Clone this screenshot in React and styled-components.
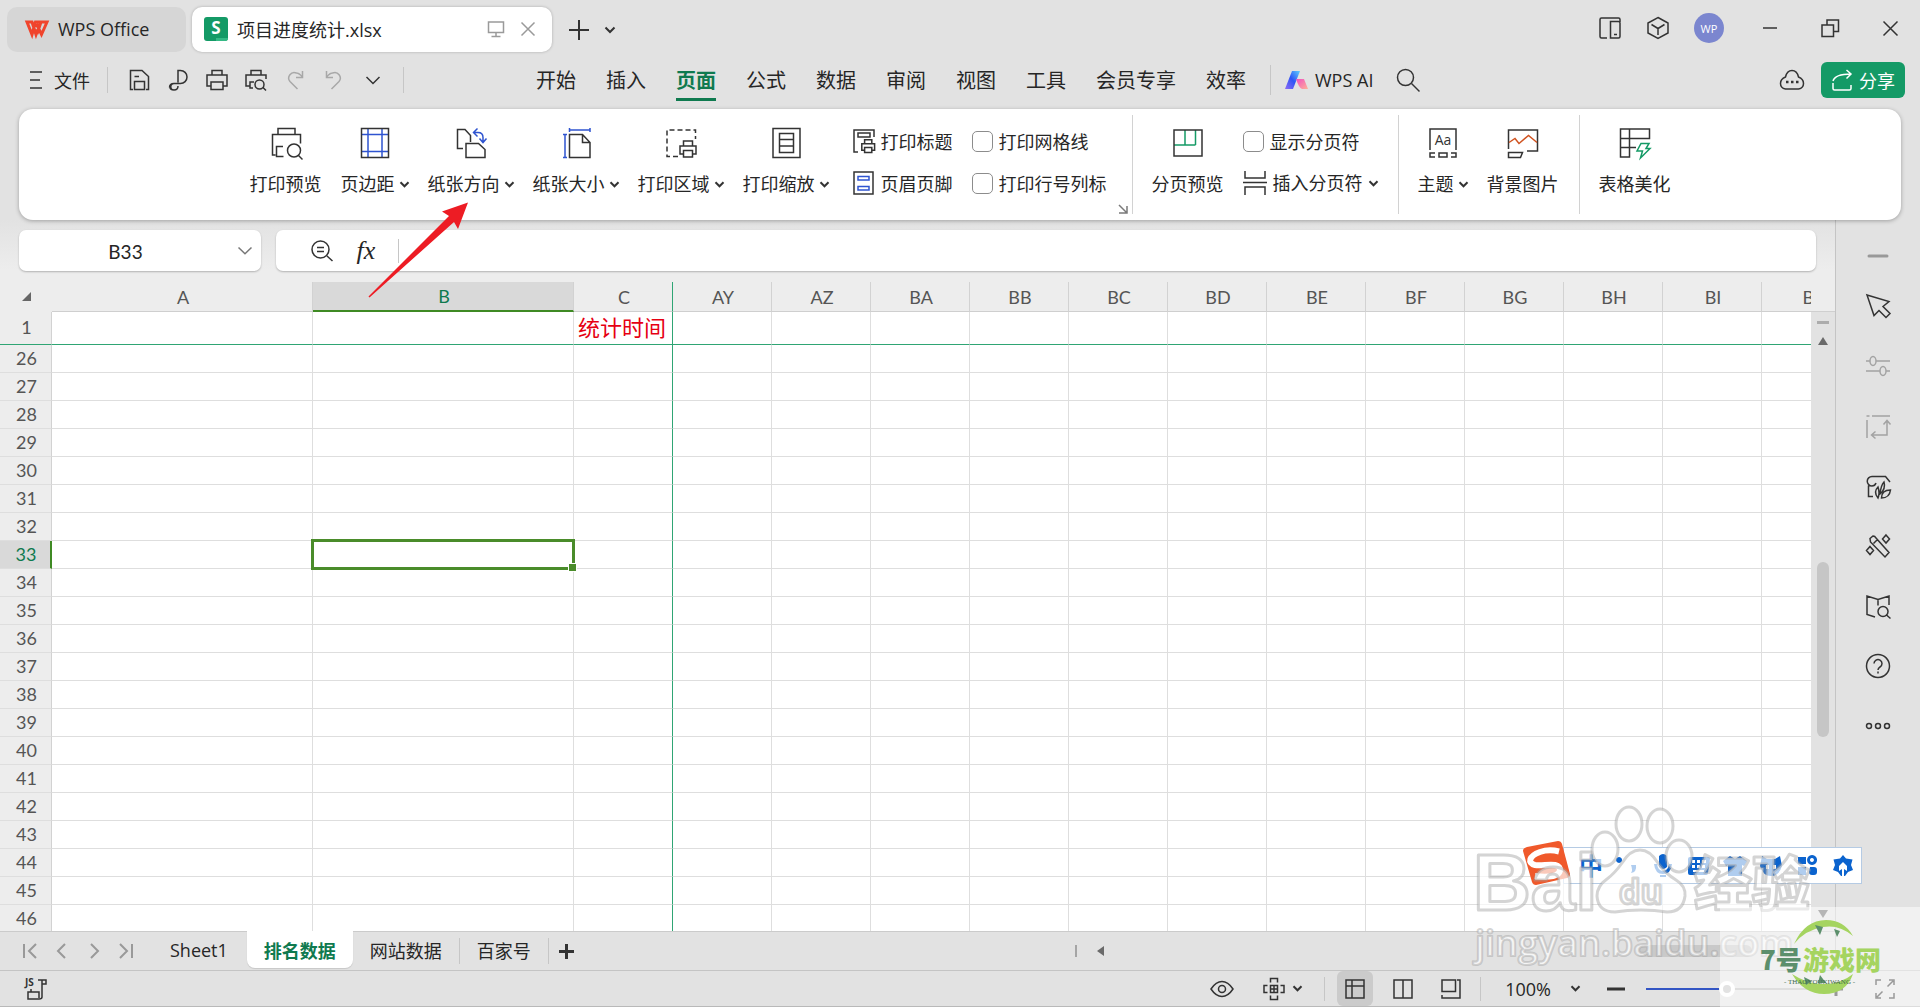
import React, { useState } from "react";
import styled, { createGlobalStyle, css } from "styled-components";

const GlobalStyle = createGlobalStyle`
* {
  margin: 0;
  padding: 0;
  box-sizing: border-box;
}
body {
  font-family: "Open Sans", "Noto Sans CJK SC", sans-serif;
  font-size: 18px;
  color: #262626;
  overflow: hidden;
}
button, input {
  font: inherit;
  color: inherit;
  background: none;
  border: none;
  outline: none;
}
button {
  cursor: pointer;
}
`

const blue = '#2f54d0'
const green = '#149a66'
const darkGreen = '#0f7a4f'

const Main = styled.main`
  position: relative;
  display: flex;
  flex-direction: column;
  height: 100vh;
  overflow: hidden;
  background: #e2e2e2;
`

/* icons */
const Svg = styled.svg`
  display: block;
  flex: none;
  fill: none;
  overflow: visible;
  stroke: ${p => p.$color || '#333'};
  stroke-width: ${p => p.$stroke ?? 1.5};
`
const Icon = ({ w = 24, h = 24, color, stroke, children }) => (
  <Svg width={w} height={h} viewBox={`0 0 ${w} ${h}`} $color={color} $stroke={stroke} aria-hidden="true">
    {children}
  </Svg>
)
const Chevron = ({ color, w = 9, stroke = 2 }) => (
  <Icon w={w} h={w} color={color} stroke={stroke}>
    <path d={`M0.500 ${w / 4}L${w / 2} ${w * 0.7}L${w - 0.5} ${w / 4}`} />
  </Icon>
)

const IconButton = styled.button`
  display: flex;
  align-items: center;
  justify-content: center;
  flex: none;
  width: ${p => p.$w || 24}px;
  height: ${p => p.$h || 24}px;
`
const Divider = styled.span`
  flex: none;
  width: 1px;
  height: ${p => p.$h || 26}px;
  background: #c6c6c6;
`

/* title bar */
const TitleBar = styled.header`
  display: flex;
  align-items: center;
  padding: 7px 18px 0 7px;
  height: 52px;
`
const HomeTab = styled.button`
  display: flex;
  align-items: center;
  gap: 9px;
  width: 179px;
  height: 45px;
  padding: 0 0 2px 18px;
  border-radius: 10px;
  background: #d6d6d6;
`
const FileTab = styled.div`
  display: flex;
  align-items: center;
  width: 360px;
  height: 45px;
  margin-left: 6px;
  padding: 0 8px 2px 12px;
  border-radius: 10px;
  background: #fff;
  box-shadow: 0 0 3px rgba(0, 0, 0, 0.25);

  strong {
    flex: 1;
    margin-left: 9px;
    font-weight: 400;
  }
`
const TabTools = styled.div`
  display: flex;
  align-items: center;
  gap: 8px;
  margin-left: 15px;
`
const WindowTools = styled.div`
  display: flex;
  align-items: center;
  gap: 24px;
  margin: 0 0 3px auto;
`
const Avatar = styled.button`
  width: 30px;
  height: 30px;
  border-radius: 50%;
  background: #7b86cf;
  color: #fff;
  font-size: 11px;
`
const WindowControls = styled.div`
  display: flex;
  align-items: center;
  gap: 36px;
  margin-left: 10px;
`

/* menu */
const MenuBar = styled.nav`
  display: flex;
  align-items: center;
  height: 57px;
  padding: 0 15px 2px 28px;
`
const FileMenu = styled.button`
  display: flex;
  align-items: center;
  gap: 10px;
  margin-right: 17px;
`
const QuickTools = styled.div`
  display: flex;
  align-items: center;
  gap: 15px;
  margin: 0 18px 0 19px;
`
const MenuTabs = styled.div`
  display: flex;
  gap: 30px;
  margin: 0 24px 0 132px;
`
const MenuTab = styled.button`
  height: 42px;
  padding-top: 6px;
  font-size: 20px;
  line-height: 28px;
  border-bottom: 3px solid transparent;
  white-space: nowrap;

  ${p => p.$active && css`
    color: ${darkGreen};
    font-weight: 700;
    border-color: ${darkGreen};
  `}
`
const AiButton = styled.button`
  display: flex;
  align-items: center;
  gap: 7px;
  margin: 0 23px 0 13px;
`
const CloudButton = styled(IconButton)`
  margin-left: auto;
`
const ShareButton = styled.button`
  display: flex;
  align-items: center;
  justify-content: center;
  gap: 6px;
  width: 84px;
  height: 36px;
  margin-left: 17px;
  border-radius: 6px;
  background: ${green};
  color: #fff;
`

/* ribbon */
const Ribbon = styled.section`
  position: relative;
  z-index: 2;
  display: flex;
  justify-content: center;
  height: 111px;
  margin: 0 19px;
  padding: 6px 0;
  border-radius: 14px;
  background: #fff;
  box-shadow: 0 1px 4px rgba(0, 0, 0, 0.3);
`
const RibbonGroup = styled.div`
  position: relative;
  display: flex;
  gap: 19px;
  padding: 13px 20px 0 19px;
  border-right: 1px solid #d2d2d2;

  &:last-child {
    border: none;
    padding-right: 0;
  }
  &:first-child {
    padding-left: 0;
    padding-right: 25px;
  }
`
const BigButton = styled.button`
  display: flex;
  flex-direction: column;
  align-items: center;
  gap: 14px;
  height: 68px;
`
const Label = styled.span`
  display: flex;
  align-items: center;
  gap: ${p => p.$gap || 5}px;
  line-height: 24px;
  white-space: nowrap;
`
const SmallColumn = styled.div`
  display: flex;
  flex-direction: column;
  gap: 18px;
  padding-top: 1px;
  margin-left: ${p => p.$left || 0}px;
`
const SmallButton = styled.button`
  display: flex;
  align-items: center;
  gap: 6px;
  height: 24px;
`
const CheckLabel = styled.label`
  display: flex;
  align-items: center;
  gap: 6px;
  height: 24px;
  white-space: nowrap;

  input {
    appearance: none;
    width: 21px;
    height: 21px;
    border: 1px solid #8c8c8c;
    border-radius: 5px;
    background: #fff;
  }
`
const Launcher = styled.button`
  position: absolute;
  right: 4px;
  bottom: 0;
  display: flex;
`

/* workspace */
const Body = styled.div`
  display: flex;
  flex: 1;
  min-height: 0;
`
const Workspace = styled.div`
  display: flex;
  flex-direction: column;
  flex: 1;
  min-width: 0;
  background: linear-gradient(#e2e2e2, #ededed 50px, #ededed);
`
const FormulaRow = styled.div`
  display: flex;
  gap: 15px;
  padding: 10px 19px 11px;
`
const Field = styled.div`
  display: flex;
  align-items: center;
  height: 41px;
  border-radius: 7px;
  background: #fff;
  box-shadow: 0 1px 2px rgba(0, 0, 0, 0.25);

  input {
    min-width: 0;
    height: 100%;
  }
`
const NameField = styled(Field)`
  width: 242px;
  padding-right: 9px;

  input {
    flex: 1;
    padding: 2px 6px 0 0;
    text-align: center;
    font-family: Lato, sans-serif;
    font-size: 19px;
  }
`
const FormulaField = styled(Field)`
  flex: 1;
  padding-left: 34px;
  gap: 20px;

  input {
    flex: 1;
  }
`
const FxButton = styled(IconButton)`
  font-family: "Liberation Serif", serif;
  font-style: italic;
  font-size: 26px;
`
const SheetArea = styled.div`
  display: flex;
  flex: 1;
  min-height: 0;
`
const GridView = styled.div`
  flex: 1;
  min-width: 0;
  overflow: hidden;
`
const Grid = styled.table`
  table-layout: fixed;
  width: 1860px;
  border-spacing: 0;
  background: #fff;

  th, td {
    height: 28px;
    border-right: 1px solid #dedede;
    border-bottom: 1px solid #dedede;
    line-height: 24px;
  }
  th {
    padding: 0 0 2px 2px;
    font-family: Lato, sans-serif;
    font-weight: 400;
    color: #555;
    background: #ededed;
    border-right-color: #d2d2d2;
  }
  thead th {
    height: 30px;
    padding-bottom: 0;
    border-bottom-color: #cfcfcf;
  }
  thead th:first-child {
    border-color: #ededed;
  }
  th.selected {
    color: ${darkGreen};
    background: #d9d9d9;
  }
  thead th.selected {
    border-bottom: 2px solid #3f8a24;
  }
  tbody th.selected {
    border-right: 2px solid #3f8a24;
  }
  .frozen-col {
    border-right-color: #2fa574;
  }
  .frozen-row > * {
    height: 33px;
    border-bottom-color: #2fa574;
  }
  td {
    padding: 0 0 2px 4px;
    color: #e60012;
    font-size: 22px;
    white-space: nowrap;
  }
`
const Corner = styled.span`
  display: flex;
  justify-content: center;
`
const ActiveCell = styled.td`
  position: relative;

  &::before {
    content: '';
    position: absolute;
    inset: -2px;
    border: 3px solid #4a8c2a;
  }
  &::after {
    content: '';
    position: absolute;
    right: -4px;
    bottom: -4px;
    width: 7px;
    height: 7px;
    border: 1px solid #fff;
    background: #4a8c2a;
  }
`
const ScrollBar = styled.div`
  display: flex;
  flex-direction: column;
  align-items: center;
  width: 24px;
  padding: 9px 0 13px;
  margin-top: 29px;
  border-top: 1px solid #cfcfcf;
  background: #e2e2e2;
`
const SplitHandle = styled.span`
  width: 12px;
  height: 3px;
  margin-bottom: 13px;
  background: #acacac;
`
const Thumb = styled.span`
  width: 12px;
  height: 175px;
  margin: 217px 0 auto;
  border-radius: 6px;
  background: #c6c6c6;
`

/* sheets */
const SheetBar = styled.div`
  display: flex;
  align-items: center;
  height: 39px;
  padding-left: 18px;
  border-top: 1px solid #cbcbcb;
  background: #e2e2e2;
`
const SheetNav = styled.div`
  display: flex;
  gap: 8px;
  margin-right: 15px;
`
const SheetTab = styled.button`
  height: 37px;
  margin-top: -1px;
  padding: 0 17px;
  align-self: flex-start;
  border-radius: 0 0 8px 8px;
  white-space: nowrap;

  ${p => p.$active && css`
    margin-left: 2px;
    background: #fff;
    color: ${darkGreen};
    font-weight: 700;
    box-shadow: 0 1px 1px rgba(0, 0, 0, 0.12);
  `}
`
const HScroll = styled.div`
  display: flex;
  align-items: center;
  width: 760px;
  margin-left: auto;
`
const HThumb = styled.span`
  width: 116px;
  height: 12px;
  margin-left: 529px;
  border-radius: 6px;
  background: #c9c9c9;
`

const SideBar = styled.aside`
  display: flex;
  flex-direction: column;
  align-items: center;
  gap: 36px;
  width: 85px;
  padding-top: 34px;
  border-left: 1px solid #c4c4c4;
`
const CollapseButton = styled(IconButton)`
  height: 4px;
`

/* status bar */
const StatusBar = styled.footer`
  display: flex;
  align-items: center;
  height: 37px;
  padding: 0 23px 0 24px;
  border-top: 1px solid #c4c4c4;
  border-bottom: 1px solid #b9b9b9;
`
const StatusTools = styled.div`
  display: flex;
  align-items: center;
  margin-left: auto;
`
const FocusButton = styled.button`
  display: flex;
  align-items: center;
  gap: 8px;
  margin: 0 22px 0 29px;
`
const ViewButton = styled(IconButton)`
  width: 36px;
  height: 35px;
  margin-left: 12px;
  border-radius: 6px;
  background: ${p => (p.$active ? '#cbcbcb' : 'none')};
`
const ZoomButton = styled.button`
  display: flex;
  align-items: center;
  gap: 20px;
  margin: 0 26px 0 24px;
`
const ViewGap = styled.span`
  width: 11px;
`
const Slider = styled.input`
  appearance: none;
  width: 183px;
  height: 16px;
  margin: 0 0 0 20px;
  background: linear-gradient(90deg, #3355c4 44%, #bdbdbd 44%) center / 100% 2px no-repeat;

  &::-webkit-slider-thumb {
    appearance: none;
    width: 16px;
    height: 16px;
    border: 4px solid #fff;
    border-radius: 50%;
    background: #c4c4c4;
  }
`
const FullButton = styled.button`
  display: flex;
  margin: 0 2px 0 32px;
`

/* floating layers */
const Pointer = styled.div`
  position: absolute;
  z-index: 3;
  left: 368px;
  top: 202px;
`
const ImeBar = styled.div`
  position: absolute;
  right: 58px;
  bottom: 123px;
  z-index: 3;
  display: flex;
  align-items: center;
  gap: 12px;
  height: 37px;
  padding: 0 6px 0 15px;
  border: 1px solid #b5cbe4;
  background: #fff;
  color: #0b63ce;
  font-weight: 700;
`
const ImeLogo = styled.div`
  position: absolute;
  left: -42px;
  top: -8px;
`
const ImeText = styled.span`
  width: 24px;
  font-size: 24px;
  line-height: 30px;
  text-align: center;
`
const Watermark = styled.div`
  position: absolute;
  right: 90px;
  bottom: 37px;
  z-index: 4;
  pointer-events: none;

  svg {
    display: block;
    stroke: rgba(160, 160, 160, 0.45);
    fill: rgba(255, 255, 255, 0.68);
    stroke-linejoin: round;
  }
`
const SiteBadge = styled.div`
  position: absolute;
  right: 0;
  bottom: 0;
  z-index: 5;
  width: 200px;
  height: 100px;
  background: rgba(255, 255, 255, 0.5);
  pointer-events: none;
`

const columns = ['A', 'B', 'C', 'AY', 'AZ', 'BA', 'BB', 'BC', 'BD', 'BE', 'BF', 'BG', 'BH', 'BI', 'BJ']
const rows = [1, ...Array.from({ length: 21 }, (_, i) => i + 26)]
const menus = ['开始', '插入', '页面', '公式', '数据', '审阅', '视图', '工具', '会员专享', '效率']

const printer = 'M4.5 6V1h9v5M4 14H1V6h16v8h-3M4.5 10.5h9V17h-9z'

const quickTools = [
  { name: '保存', icon: <path d="M6 21.5H3.5v-19H15l6.5 6v13H19M7.5 21.5v-8h10v8zM7.5 8.5H12" /> },
  { name: '输出为PDF', icon: <path d="M12 14.500V2.500h2.500a6.500 6.500 0 0 1 0 13H8a3.200 3.200 0 0 0 0 6.500q4 0 4-4M3.500 19.500q0-4 4.500-4M4 19q0 3 4 3" /> },
  { name: '打印', icon: <path d="M7 7V2.5h10V7M5.5 18H2V7h20v11h-3.5M6 14h12v7.5H6z" /> },
  { name: '打印预览', icon: <path d="M7 7V2.5h10V7M5.5 18H2V7h20v4M9 20H6v-6h4M22 22.5l-3.5-3.5M20 16.5a4.5 4.5 0 1 1-9 0a4.5 4.5 0 0 1 9 0z" /> },
  { name: '恢复', off: true, icon: <path d="M14.5 21L7 13.5A5.500 5.500 0 0 1 13.500 5q2.500 0 6 4M19.5 3v6.5H13" /> },
  { name: '撤销', off: true, icon: <path d="M9.5 21L17 13.5A5.500 5.500 0 0 0 10.500 5q-2.500 0-6 4M4.5 3v6.5H11" /> },
  { name: '更多', icon: <path d="M5.5 9l6.5 6.5L18.5 9" /> },
]

const sideTools = [
  { name: '选择', icon: <path d="M1 1l22 6.5-6 5 7 7-4 4-7-7-5 5z" /> },
  { name: '属性', off: true, icon: <path d="M0 7h4M10 7h14M0 17h14M20 17h4M4 7a3 4.5 0 1 0 6 0a3 4.5 0 1 0-6 0M14 17a3 4.5 0 1 0 6 0a3 4.5 0 1 0-6 0" /> },
  { name: '区域', off: true, icon: <path d="M1 6v18M6 2h18M0.5 2h3M21 7v14H6M17.5 10.5L21 6.5l3.5 4M9.5 17.5L5.5 21l4 3.5" /> },
  { name: '素材', icon: <path d="M24 8l-4.5-5.5H6A4.500 4.500 0 1 0 6 12q3 0 4-3M2.5 11.5v11H7M12 24q-5-6 0-11q2 6 0 11zM14 20q1-9 4-12q2 7-4 12zM15.5 24q0-8 9-8q-1 8-9 8z" /> },
  { name: '智能美化', icon: <path d="M4 4.5l3-2.5q2 0 3 2l13 14.5-4 4.5L4.5 8zM7.5 9.5l4-4M20 1l3.5 4-3.5 4-3.5-4zM4 12.5l3.5 4-3.5 4-3.5-4z" /> },
  { name: '查找', icon: <path d="M9 23L1 20.5V2l11 3.5L23 2v9M12 5.5v6M22 17.5a5 5 0 1 1-10 0a5 5 0 0 1 10 0zM20.5 21l4 3.5" /> },
  { name: '帮助', icon: <><circle cx="12" cy="12" r="11.5" /><path d="M8 9.5a4 4 0 1 1 6 3.5q-2 1.2-2 3M12 17.5v2" /></> },
  { name: '更多', icon: <><circle cx="3" cy="12" r="2.5" /><circle cx="12" cy="12" r="2.5" /><circle cx="21" cy="12" r="2.5" /></> },
]

const ribbonIcons = {
  preview: <><path d="M8 6.5v-6h17v6M5.5 27H2.5V6.5h28v9M13 18.5H6.5v10h7" /><circle cx="24" cy="22.5" r="6.5" /><path d="M28.5 27.5l4 4" /></>,
  margin: <><path stroke={blue} d="M9 1v28M23 1v28M3 6.5h26M3 23.5h26" /><path d="M2.5 0.5h27v29h-27z" /></>,
  direction: <><path d="M8 20.5H2.5v-19h7.5l5.5 6V14M11 15.5h12.5l6.5 6v8H11z" /><path stroke={blue} d="M19 4.5h4q5 0 5 5v5M22.5 0.5l-4 4 4 4M24.5 10.5l3.5 4 3.5-4" /></>,
  size: <><path d="M9.5 6.5h13l7.5 8v15H9.5zM22.5 6.5v8H30" /><path stroke={blue} d="M9.5 2H30M9.5 0v4M30 0v4M5 6.5v23M3 6.5h4M3 29.5h4" /></>,
  area: <><path strokeDasharray="5 3" d="M13 28.5H2V2h28.5v9" /><g transform="translate(14 12)"><path d={printer} /></g></>,
  scale: <path d="M3 0.5h27v29H3zM9.5 5.5h14v19h-14zM9.5 11.5h14M9.5 18h14" />,
  pageBreak: <><path stroke={green} d="M13 2v15M23.5 2v15M2 17h21.5" /><path d="M2 2h28v26H2z" /></>,
  theme: <><path d="M3 22V1h26v21M8 25H3v4h5M24 25h5v4h-5M12 25h8v4h-8z" /><text x="16" y="17" textAnchor="middle" fontSize="14" stroke="none" fill="#333">Aa</text></>,
  picture: <><path d="M1.5 21V2h29v21H20M1.5 24.5h14l-2 5h-12z" /><path stroke="#d0521f" d="M2 14.5l6-4 4 5 9.5-8 8.5 7" /></>,
  beautify: <><path d="M1.5 1h29v9.5h-29zM10.5 1v28h-9V10M1.5 19.5H17" /><path stroke={green} d="M22 15.5h8l-3 5h4l-9.5 9.5 2-7H18z" /></>,
}

const RibbonButton = ({ icon, label, menu }) => (
  <BigButton>
    <Icon w={32} h={30}>{ribbonIcons[icon]}</Icon>
    <Label>{label}{menu && <Chevron />}</Label>
  </BigButton>
)

const Check = ({ label }) => (
  <CheckLabel><input type="checkbox" />{label}</CheckLabel>
)

const imeIcons = [
  <path d="M4 3a3 3 0 1 0 .1 0zM16 11h5q1 7-5 8 2-3 0-8z" />,
  <path d="M8 2q4-4 8 0v11q-4 4-8 0zM3 10h3q1 7 6 7t6-7h3q-1 10-9 10T3 10zM9 21h6v2H9z" />,
  <path d="M3 3h18q2 0 2 2l-2 14q0 2-2 2H3q-2 0-2-2V5q0-2 2-2zM5 6v3h3V6zM10 6v3h3V6zM15 6v3h4V6zM5 11v3h3v-3zM10 11v3h3v-3zM15 11v3h3v-3zM6 16v2h11v-2z" fillRule="evenodd" />,
  <path d="M7 2l5 3 5-3 7 5-3 5-2-1v11H5V11l-2 1-3-5z" />,
  <path d="M3 2l5 3h8l5-3 2 10q-3 10-11 10T1 12zM7 11v4h3v-4zM14 11v4h3v-4z" fillRule="evenodd" />,
  <path d="M3 3h8v7H3zM3 13h8v8H3zM15 13h4q3 0 3 3v2q0 3-3 3h-2q-3 0-3-3zM17 1a5 5 0 1 0 .1 0zm0 3a2 2 0 1 1-.1 0z" fillRule="evenodd" />,
  <path d="M12 1l3 3.500 6.500 1L20 11l2 5-5 2-3 4h-1v-7l3 2v-5l-4-4-4 4v5l3-2v7h-1l-3-4-5-2 2-5-1.500-5.500L9 4.500z" />,
]

function App() {
  const [menu, setMenu] = useState('页面')
  const [sheet, setSheet] = useState('排名数据')
  const [zoom, setZoom] = useState(44)

  const renderCell = (row, col) => {
    const className = col === 'C' ? 'frozen-col' : undefined
    if (row === 33 && col === 'B') return <ActiveCell key={col} />
    return <td key={col} className={className}>{row === 1 && col === 'C' ? '统计时间' : ''}</td>
  }

  const sheetTab = name => (
    <SheetTab $active={sheet === name} onClick={() => setSheet(name)}>{name}</SheetTab>
  )

  return (
    <Main>
      <GlobalStyle />

      <TitleBar>
        <HomeTab>
          <Icon w={24} h={18} color="#f0442c" stroke={3}>
            <path d="M2 2h5l4 12.500L15.500 2h-5L7 14.500zM10 2h6M11.500 4l5 10.500L22 2h-6l-4 12" />
          </Icon>
          WPS Office
        </HomeTab>
        <FileTab>
          <Icon w={24} h={24} stroke={0}>
            <rect width="24" height="24" rx="3" fill={green} />
            <path d="M12 21h12v0q0 3-3 3h-9z" fill="#35b985" />
            <text x="12" y="17" textAnchor="middle" fontSize="17" fontWeight="700" fill="#fff">S</text>
          </Icon>
          <strong>项目进度统计.xlsx</strong>
          <IconButton aria-label="窗口" $w={32}>
            <Icon w={18} h={18} color="#9a9a9a"><path d="M1.5 2h15v10.5h-15zM9 12.5V16M4.5 16.5h9" /></Icon>
          </IconButton>
          <IconButton aria-label="关闭标签" $w={32} $h={32}>
            <Icon w={14} h={14} color="#9a9a9a"><path d="M0.5 0.5l13 13M13.5 0.5l-13 13" /></Icon>
          </IconButton>
        </FileTab>
        <TabTools>
          <IconButton aria-label="新建"><Icon w={20} h={20} stroke={2}><path d="M10 0v20M0 10h20" /></Icon></IconButton>
          <IconButton aria-label="标签列表" $w={22}><Chevron w={10} /></IconButton>
        </TabTools>
        <WindowTools>
          <IconButton aria-label="侧栏">
            <Icon><path d="M9 22H3.500q-1.500 0-1.500-1.500v-17Q2 2 3.500 2h17Q22 2 22 3.500V6M12.500 5.500h8q1.500 0 1.500 1.500v13.500q0 1.500-1.500 1.500h-8zM16 18.500h3" /></Icon>
          </IconButton>
          <IconButton aria-label="应用">
            <Icon><path d="M12 1.5l10 5.5v10L12 22.5 2 17V7zM5.5 8.5L12 12.5l6.5-4M12 12.5V19" /></Icon>
          </IconButton>
          <Avatar>WP</Avatar>
          <WindowControls>
            <IconButton aria-label="最小化"><Icon w={14} h={2}><path d="M0 1h14" /></Icon></IconButton>
            <IconButton aria-label="还原">
              <Icon w={18} h={18}><path d="M1 6h11.5v11.5H1zM6 6V1h11.5v11.5h-5" /></Icon>
            </IconButton>
            <IconButton aria-label="关闭"><Icon w={15} h={15}><path d="M0.5 0.5l14 14M14.5 0.5l-14 14" /></Icon></IconButton>
          </WindowControls>
        </WindowTools>
      </TitleBar>

      <MenuBar>
        <FileMenu>
          <Icon w={16} h={18}><path d="M2 1h12M2 9h10M2 17h12" /></Icon>
          文件
        </FileMenu>
        <Divider />
        <QuickTools>
          {quickTools.map(t => (
            <IconButton key={t.name} aria-label={t.name}><Icon color={t.off && '#a8a8a8'}>{t.icon}</Icon></IconButton>
          ))}
        </QuickTools>
        <Divider />
        <MenuTabs>
          {menus.map(m => (
            <MenuTab key={m} $active={m === menu} onClick={() => setMenu(m)}>{m}</MenuTab>
          ))}
        </MenuTabs>
        <Divider $h={30} />
        <AiButton>
          <Icon w={24} h={18} stroke={0}>
            <defs>
              <linearGradient id="aiBlue" x1="1" y1="0" x2="0" y2="1">
                <stop offset="0" stopColor="#5fd0ff" /><stop offset="0.5" stopColor="#2f55f5" /><stop offset="1" stopColor="#8f6bf5" />
              </linearGradient>
              <linearGradient id="aiPink" x1="0" y1="0" x2="1" y2="1">
                <stop offset="0" stopColor="#f04fc0" /><stop offset="1" stopColor="#ffb199" />
              </linearGradient>
            </defs>
            <path d="M8 0h8l-7 18H1z" fill="url(#aiBlue)" />
            <path d="M12 8h8l4 10h-6q-3-1-6-10z" fill="url(#aiPink)" />
          </Icon>
          WPS AI
        </AiButton>
        <IconButton aria-label="搜索">
          <Icon><circle cx="9.5" cy="9.5" r="8" /><path d="M15.5 15.5l8 8" /></Icon>
        </IconButton>
        <CloudButton aria-label="云同步">
          <Icon><path d="M5.5 9Q7 2.500 12 2.500T18.500 9q5 2 5 6.500T18.500 21h-13Q0.500 20 0.500 15.500T5.500 9z" /><path strokeWidth="2.5" d="M6 14h2.5M11 14h2.5M16 14h2.5" /></Icon>
        </CloudButton>
        <ShareButton>
          <Icon w={22} h={22} color="#fff"><path d="M2 14v5.5q0 1.5 1.5 1.5h15q1.5 0 1.5-1.5V16M2 12Q4 5 20 5M15.5 1l4.5 4-4.5 4.5" /></Icon>
          分享
        </ShareButton>
      </MenuBar>

      <Ribbon>
        <RibbonGroup>
          <RibbonButton icon="preview" label="打印预览" />
          <RibbonButton icon="margin" label="页边距" menu />
          <RibbonButton icon="direction" label="纸张方向" menu />
          <RibbonButton icon="size" label="纸张大小" menu />
          <RibbonButton icon="area" label="打印区域" menu />
          <RibbonButton icon="scale" label="打印缩放" menu />
          <SmallColumn $left={5}>
            <SmallButton>
              <Icon w={22}><path d="M5 23H1V1h20v7M5 4h12v4H5z" /><g transform="translate(8 10) scale(0.8)"><path d={printer} strokeWidth="1.9" /></g></Icon>
              打印标题
            </SmallButton>
            <SmallButton>
              <Icon w={22}><path d="M1 1h19v22H1z" /><path stroke={blue} d="M5 5.5h11V9H5zM5 15.5h11V19H5z" /></Icon>
              页眉页脚
            </SmallButton>
          </SmallColumn>
          <SmallColumn>
            <Check label="打印网格线" />
            <Check label="打印行号列标" />
          </SmallColumn>
          <Launcher aria-label="页面设置">
            <Icon w={9} h={9} color="#7a7a7a"><path d="M0 0l8 8M8 1v7H0" /></Icon>
          </Launcher>
        </RibbonGroup>
        <RibbonGroup>
          <RibbonButton icon="pageBreak" label="分页预览" />
          <SmallColumn>
            <Check label="显示分页符" />
            <SmallButton>
              <Icon><path d="M2 0v7h20V0M0 11.5h24M2 24v-8h20v8" /></Icon>
              <Label $gap={6}>插入分页符<Chevron /></Label>
            </SmallButton>
          </SmallColumn>
        </RibbonGroup>
        <RibbonGroup>
          <RibbonButton icon="theme" label="主题" menu />
          <RibbonButton icon="picture" label="背景图片" />
        </RibbonGroup>
        <RibbonGroup>
          <RibbonButton icon="beautify" label="表格美化" />
        </RibbonGroup>
      </Ribbon>

      <Body>
        <Workspace>
          <FormulaRow>
            <NameField>
              <input aria-label="名称框" defaultValue="B33" />
              <Chevron w={14} stroke={1.5} color="#777" />
            </NameField>
            <FormulaField>
              <IconButton aria-label="查找公式">
                <Icon><circle cx="10.5" cy="10.5" r="8.5" /><path d="M17 17l5.5 5M7 8.5h7M7 12.5h7" /></Icon>
              </IconButton>
              <FxButton>fx</FxButton>
              <Divider $h={24} />
              <input aria-label="编辑栏" />
            </FormulaField>
          </FormulaRow>

          <SheetArea>
            <GridView>
              <Grid>
                <colgroup>
                  <col width="52" />
                  {columns.map(c => <col key={c} width={c === 'A' || c === 'B' ? 261 : 99} />)}
                </colgroup>
                <thead>
                  <tr>
                    <th><Corner><Icon w={10} h={10} stroke={0}><path d="M9 0v9H0z" fill="#666" /></Icon></Corner></th>
                    {columns.map(c => (
                      <th key={c} className={c === 'B' ? 'selected' : c === 'C' ? 'frozen-col' : undefined}>{c}</th>
                    ))}
                  </tr>
                </thead>
                <tbody>
                  {rows.map(r => (
                    <tr key={r} className={r === 1 ? 'frozen-row' : undefined}>
                      <th className={r === 33 ? 'selected' : undefined}>{r}</th>
                      {columns.map(c => renderCell(r, c))}
                    </tr>
                  ))}
                </tbody>
              </Grid>
            </GridView>
            <ScrollBar>
              <SplitHandle />
              <Icon w={10} h={8} stroke={0}><path d="M5 0l5 8H0z" fill="#6a6a6a" /></Icon>
              <Thumb />
              <Icon w={10} h={8} stroke={0}><path d="M5 8L0 0h10z" fill="#6a6a6a" /></Icon>
            </ScrollBar>
          </SheetArea>

          <SheetBar>
            <SheetNav>
              <IconButton aria-label="第一个"><Icon w={16} h={14} color="#999" stroke={2}><path d="M2 0v14M14 0L7 7l7 7" /></Icon></IconButton>
              <IconButton aria-label="上一个"><Icon w={16} h={14} color="#999" stroke={2}><path d="M11 0L4 7l7 7" /></Icon></IconButton>
              <IconButton aria-label="下一个"><Icon w={16} h={14} color="#999" stroke={2}><path d="M5 0l7 7-7 7" /></Icon></IconButton>
              <IconButton aria-label="最后一个"><Icon w={16} h={14} color="#999" stroke={2}><path d="M2 0l7 7-7 7M14 0v14" /></Icon></IconButton>
            </SheetNav>
            {sheetTab('Sheet1')}
            {sheetTab('排名数据')}
            {sheetTab('网站数据')}
            <Divider />
            {sheetTab('百家号')}
            <Divider />
            <IconButton aria-label="新建工作表" $w={36}><Icon w={15} h={15} stroke={3}><path d="M7.5 0v15M0 7.5h15" /></Icon></IconButton>
            <HScroll>
              <Icon w={32} h={12} stroke={0}><path d="M0 0h2v12H0z" fill="#a5a5a5" /><path d="M29 1v10l-7-5z" fill="#6a6a6a" /></Icon>
              <HThumb />
            </HScroll>
          </SheetBar>
        </Workspace>

        <SideBar>
          <CollapseButton aria-label="收起"><Icon h={4} color="#999" stroke={3}><path strokeLinecap="round" d="M3 2h18" /></Icon></CollapseButton>
          {sideTools.map(t => (
            <IconButton key={t.name} aria-label={t.name}><Icon color={t.off && '#a3a3a3'}>{t.icon}</Icon></IconButton>
          ))}
        </SideBar>
      </Body>

      <StatusBar>
        <IconButton aria-label="JS宏">
          <Icon><text x="1" y="9" fontSize="10" fontWeight="700" stroke="none" fill="#333">JS</text><path d="M14 3h8v4h-4v13q0 2-3 2H4v-7h11v6M14 3h4v4M7 15v-3" /></Icon>
        </IconButton>
        <StatusTools>
          <IconButton aria-label="护眼模式">
            <Icon><path d="M1 12Q6 4.5 12 4.5T23 12Q18 19.5 12 19.5T1 12z" /><circle cx="12" cy="12" r="3.5" /></Icon>
          </IconButton>
          <FocusButton aria-label="阅读模式">
            <Icon w={22} h={22}><path d="M7.5 7.5h7v7h-7zM11 7.5v7M7.5 11h7M7.5 4.5v-4h7v4M7.5 17.5v4h7v-4M4.5 7.5H1v7h3.5M17.5 7.5H21v7h-3.5" /></Icon>
            <Chevron />
          </FocusButton>
          <Divider $h={24} />
          <ViewButton $active aria-label="普通视图"><Icon w={20} h={20}><path d="M1 1h18v18H1zM7 1v18M1 7h18" /></Icon></ViewButton>
          <ViewButton aria-label="分页视图"><Icon w={20} h={20}><path d="M1 1h18v18H1zM10 1v18" /></Icon></ViewButton>
          <ViewButton aria-label="页面布局"><Icon w={20} h={20}><path d="M1 1h13.5v11.5H1zM16 1h3v18H1v-3" /></Icon></ViewButton>
          <ViewGap />
          <Divider $h={24} />
          <ZoomButton>100%<Chevron /></ZoomButton>
          <IconButton aria-label="缩小" $w={20}><Icon w={18} h={4} stroke={3}><path d="M0 2h18" /></Icon></IconButton>
          <Slider type="range" aria-label="缩放" value={zoom} onChange={e => setZoom(Number(e.target.value))} />
          <IconButton aria-label="放大" $w={14}><Icon w={14} h={14} stroke={3}><path d="M7 0v14M0 7h14" /></Icon></IconButton>
          <FullButton aria-label="全屏">
            <Icon w={20} h={20}><path d="M1 6V1h5M14 1h5v5M19 14v5h-5M6 19H1v-5M12.5 7.5L18 2M7.5 12.5L2 18" /></Icon>
          </FullButton>
        </StatusTools>
      </StatusBar>

      <Pointer>
        <Icon w={100} h={96} stroke={0}>
          <path d="M0.5 94.5L81 14l-7-4.5L100 0.5 90 27l-4-7L1.5 95.5z" fill="#ed1c24" />
        </Icon>
      </Pointer>

      <ImeBar>
        <ImeLogo>
          <Icon w={48} h={46} stroke={0}>
            <path d="M5 7L36 1q3 0 4 3l8 30q0 3-3 4L14 45q-3 0-4-3L1 11q0-3 4-4z" fill="#f0592b" />
            <path d="M37 11.500Q27 9 18 12c-11 4-13 11-5 13 6 1 14-1 20 0 8 2 6 9-2 11-5 1-11 1-18 0" stroke="#fff" strokeWidth="6" fill="none" />
          </Icon>
        </ImeLogo>
        <ImeText>中</ImeText>
        {imeIcons.map((icon, i) => (
          <Icon key={i} stroke={0}><g fill="#0b63ce">{icon}</g></Icon>
        ))}
      </ImeBar>

      <Watermark>
        <svg width="360" height="170" viewBox="0 0 360 170" strokeWidth="3" fontFamily='"Open Sans", "Noto Sans CJK SC", sans-serif' aria-hidden="true">
          <text x="3" y="110" fontSize="80" fontWeight="700" fontFamily='"Liberation Sans", sans-serif'>Bai</text>
          <ellipse cx="135" cy="49" rx="13" ry="17" />
          <ellipse cx="159" cy="24" rx="13" ry="17" />
          <ellipse cx="190" cy="26" rx="13" ry="17" />
          <ellipse cx="209" cy="56" rx="13" ry="16" />
          <path d="M170 50q10 0 18 13 8 11 18 17 10 6 9 16-2 16-18 16-12-2-26-2t-26 2q-17 0-18-16 0-10 10-17 8-6 15-16 8-13 18-13z" />
          <text x="149" y="104" fontSize="34" fontWeight="700">du</text>
          <text x="224" y="105" fontSize="58" fontWeight="900">经验</text>
          <text x="5" y="156" fontSize="36" fontWeight="600" strokeWidth="2">jingyan.baidu.com</text>
        </svg>
      </Watermark>

      <SiteBadge>
        <Icon w={200} h={100} stroke={0}>
          <path d="M74 37q11-24 32-24 18 0 27 16-14-12-30-9-18 3-29 17z" fill="#a5d460" />
          <path d="M72 67q12 20 32 20 22 0 29-20-12 10-30 10-16 0-31-10z" fill="#a5d460" />
          <path d="M95 18l8 2-3 8zM114 22l6 2-3 6zM84 70l8 4-6 4zM100 68l6 8h-8z" fill="#5c8f6c" />
          <g fontSize="26" fontWeight="900" fontFamily='"Noto Sans CJK SC", sans-serif'>
            <text x="40" y="63" fill="#5c8f6c">7号</text>
            <text x="83" y="63" fill="#a5d460">游戏网</text>
          </g>
          <text x="64" y="77" fontSize="7" fontFamily='"Liberation Serif", serif' fill="#3f6b4c">- THAOYOUXIWANG -</text>
        </Icon>
      </SiteBadge>
    </Main>
  );
}

export default App;
